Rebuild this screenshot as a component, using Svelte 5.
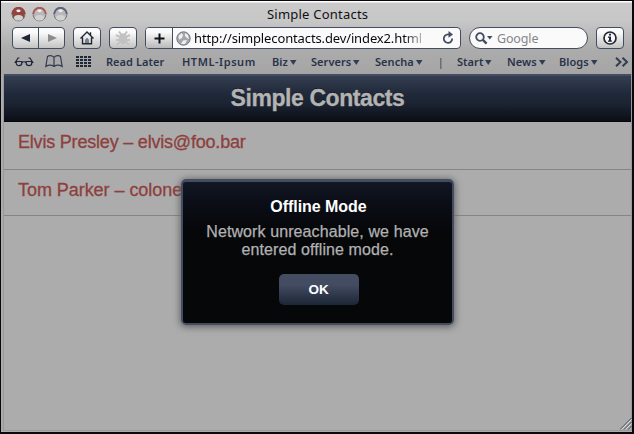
<script>
  const bookmarks = [
    { label: 'Read Later', width: 76, menu: false },
    { label: 'HTML-Ipsum', width: 90, spacing: 0.55, menu: false },
    { label: 'Biz', width: 39, menu: true },
    { label: 'Servers', width: 64, menu: true },
    { label: 'Sencha', width: 63, menu: true },
    { label: '|', width: 19, menu: false },
    { label: 'Start', width: 50, menu: true },
    { label: 'News', width: 52, menu: true },
    { label: 'Blogs', width: 56, menu: true }
  ];
  const contacts = ['Elvis Presley – elvis@foo.bar', 'Tom Parker – colonel@foo.bar'];
  const lights = ['#94433f', '#a95a56', '#59647b'];
</script>

<div class="window">
  <header class="chrome">
    <div class="titlebar">
      <div class="lights">
        {#each lights as color, i}
          <svg width="15" height="15" viewBox="0 0 15 15">
            <circle cx="7.5" cy="7.5" r="6.4" fill={i ? '#b8b8ba' : '#94433f'} stroke="#777" />
            <path d="M1.3 7A6.2 6.2 0 0 1 13.7 7" fill="none" stroke={color} stroke-width="2" />
            <ellipse cx="7.5" cy="10.8" rx="4.5" ry="2.8" fill="#d2d2d2" />
            <ellipse cx="7.5" cy="3.8" rx="2.2" ry="1.4" fill="#eee" />
          </svg>
        {/each}
      </div>
      <span class="title">Simple Contacts</span>
    </div>

    <div class="toolbar">
      <div class="btn nav">
        <span><svg width="10" height="10"><path d="M9 1v8L0 5z" fill="#1f2736" /></svg></span>
        <span><svg width="10" height="10"><path d="M1 1v8l9-4z" fill="#8c8c8e" /></svg></span>
      </div>
      <div class="btn">
        <svg width="16" height="16" viewBox="0 0 16 16" fill="none" stroke="#1f2736" stroke-width="1.4">
          <path d="M1.5 8.5 8 2l6.5 6.5M3.500 7.500v6.300h9V7.500M11.500 5V2.200" />
          <path d="M7 13.500V9.700L8 8.500l1 1.200v3.800" stroke-width="1" />
        </svg>
      </div>
      <div class="btn">
        <svg width="16" height="16" viewBox="0 0 16 16" fill="none" stroke="#c2c2c3" stroke-width="2">
          <ellipse cx="8" cy="8.7" rx="3" ry="4.5" fill="#c2c2c3" />
          <path d="M4 1.5 6.5 5M12 1.5 9.5 5M1 5l4 2M15 5l-4 2M1 10h14M2 14.5l3.500-3M14 14.500l-3.500-3" />
        </svg>
      </div>
      <div class="address">
        <div class="add"><svg width="11" height="11"><path d="M5.500 0.500v10M0.500 5.500h10" stroke="#0c101b" stroke-width="2" /></svg></div>
        <svg class="globe" width="15" height="15" viewBox="0 0 15 15">
          <circle cx="7.5" cy="7.5" r="6.7" fill="#a5a6aa" stroke="#777a83" />
          <path d="M2.500 5 5.500 2l1.500 2-1 3-3 1.500zM9 2l3 2 1 4-2-1-2-2zM7 9.500l4-.5-2 4-4 0z" fill="#f0f0f0" />
        </svg>
        <span class="url">http://simplecontacts.dev/index2.html</span>
        <svg class="reload" width="12" height="14" viewBox="0 0 12 14">
          <path d="M10.200 7.500A4.200 4.200 0 1 1 6 3.400H8" fill="none" stroke="#434c61" stroke-width="1.8" />
          <path d="M6.500 0v6.800L11 3.400z" fill="#434c61" />
        </svg>
      </div>
      <div class="search">
        <svg width="18" height="14" viewBox="0 0 18 14">
          <circle cx="5" cy="6" r="3.8" fill="none" stroke="#434c61" stroke-width="1.8" />
          <path d="m7.600 8.600 4 4" stroke="#434c61" stroke-width="2.4" />
          <path d="M12 5h5.500l-2.700 3.500z" fill="#434c61" />
        </svg>
        <span>Google</span>
      </div>
      <div class="btn">
        <svg width="14" height="14" viewBox="0 0 14 14">
          <circle cx="7" cy="7" r="6" fill="#f8f8f8" stroke="#1f2736" stroke-width="1.7" />
          <path d="M6 2.800h2v1.700H6zM5 5.600h3v4h1v1.200H5V9.600h1V6.700H5z" fill="#1f2736" />
        </svg>
      </div>
    </div>

    <nav class="bookmarks">
      <svg class="glasses" width="20" height="10" viewBox="0 0 20 10" fill="none" stroke="#1f2736" stroke-width="1.2">
        <path d="M1.200 5.500 4 1h1.500M18.800 5.500 16 1h-1.500M.5 5.500h2M8 5.500c1-1 3-1 4 0M17.500 5.500h2" />
        <path d="M2.200 4.500h5.600v1.500c0 3.500-5.600 3.500-5.600 0zM12.200 4.500h5.600v1.500c0 3.500-5.600 3.500-5.600 0z" />
      </svg>
      <svg class="book" width="18" height="13" viewBox="0 0 18 13" fill="none" stroke="#343d50" stroke-width="1.2">
        <path d="M9 2.500C7.500.2 4 .2 2.500 1.500L.8 11.500c2.500-1.500 6-1.500 8.200 0 2.200-1.500 5.700-1.500 8.200 0l-1.700-10C14 .2 10.500.2 9 2.500zV11.500" />
      </svg>
      <svg class="grid" width="15" height="12">
        {#each [0, 1, 2, 3] as col}
          {#each [0, 1, 2, 3] as row}
            <rect x={col * 4} y={row * 3} width="3" height="2" fill="#1f2736" />
          {/each}
        {/each}
      </svg>
      {#each bookmarks as item}
        <span class="bookmark" class:divider={item.label === '|'} style:width="{item.width}px" style:letter-spacing="{item.spacing ?? 0.05}px">
          {item.label}{#if item.menu}<svg width="7" height="5"><path d="M0 0h6.500L3.250 5z" fill="#343d50" /></svg>{/if}
        </span>
      {/each}
      <svg class="more" width="14" height="10" fill="none" stroke="#343d50" stroke-width="2">
        <path d="m1 .7 4.500 4.300L1 9.300M7.500.7 12 5 7.500 9.300" />
      </svg>
    </nav>
  </header>

  <main>
    <h1>Simple Contacts</h1>
    {#each contacts as contact}
      <div class="row"><span>{contact}</span></div>
    {/each}
  </main>

  <section class="dialog" role="dialog" aria-label="Offline Mode">
    <h2>Offline Mode</h2>
    <p>Network unreachable, we have<br />entered offline mode.</p>
    <button>OK</button>
  </section>

  <svg class="grip" width="12" height="12" stroke="#434c61">
    <path d="M0 11.500 11.500 0M4 11.500 11.500 4M8 11.500 11.500 8" />
    <path d="M1.500 11.500 11.500 1.500M5.500 11.500 11.500 5.500" stroke="#ddd" />
  </svg>
</div>

<style>
  :global(body) { background: #0a080c; }
  .window {
    position: relative;
    box-sizing: border-box;
    width: 634px;
    height: 434px;
    border: 1px solid #0a080c;
    border-right-width: 2px;
    border-bottom-width: 2px;
    background: #acacac;
    overflow: hidden;
    font-family: "Liberation Sans", sans-serif;
  }
  .chrome {
    height: 73px;
    background: linear-gradient(#fff 0 1px, #cacaca 2px, #c7c7c7 20px, #acacac 48px, #a5a5a5 73px);
    font-family: "Noto Sans", sans-serif;
  }
  .titlebar { display: flex; height: 26px; align-items: center; }
  .lights { display: flex; flex: none; gap: 6px; padding-left: 10px; width: 266px; box-sizing: border-box; }
  .title { font-size: 13px; line-height: 18px; letter-spacing: .22px; color: #111; white-space: nowrap; }
  .toolbar { display: flex; height: 22px; padding-left: 11px; gap: 8px; }
  .btn, .address, .search { box-sizing: border-box; border: 1px solid #434c61; height: 22px; }
  .btn {
    display: flex;
    align-items: center;
    justify-content: center;
    width: 28px;
    border-radius: 4px;
    background: linear-gradient(#fbfbfb 20%, #c3c3c3);
  }
  .nav { width: 53px; }
  .nav span { flex: 1; height: 100%; display: flex; align-items: center; justify-content: center; }
  .nav span + span { border-left: 1px solid #434c61; }
  .address { display: flex; width: 316px; align-items: center; border-radius: 4px; background: #fafafa; overflow: hidden; }
  .add {
    display: flex;
    align-items: center;
    justify-content: center;
    width: 26px;
    height: 20px;
    border-right: 1px solid #434c61;
    background: linear-gradient(#fafafa 20%, #b9b9b9);
  }
  .globe { margin-left: 3px; }
  .url {
    width: 248px;
    margin-left: 3px;
    font-size: 13px;
    letter-spacing: -.13px;
    white-space: nowrap;
    color: transparent;
    background: linear-gradient(90deg, #080a10 210px, #c5c5c5 229px);
    background-clip: text;
  }
  .reload { margin-left: 0; }
  .search { display: flex; align-items: center; width: 119px; padding-left: 5px; border-radius: 11px; background: #fafafa; }
  .search span { margin-left: 4px; font-size: 12.5px; letter-spacing: -.15px; color: #858587; }
  .bookmarks { display: flex; height: 24px; align-items: center; box-sizing: border-box; padding: 1px 0 0 13px; }
  .book { margin-left: 11px; }
  .grid { margin: 0 15px 0 13px; }
  .bookmark { flex: none; font-size: 11px; font-weight: 600; line-height: 20px; color: #29334a; white-space: nowrap; }
  .divider { font-size: 10px; font-weight: 400; }
  .bookmark svg { margin-left: 2px; vertical-align: 1px; }
  main { height: 356px; margin-left: 2px; border: solid #99999c; border-width: 0 1px 1px; }
  h1 {
    margin: 0;
    box-sizing: border-box;
    height: 48px;
    border-top: 2px solid #434c61;
    border-bottom: 1px solid #05070b;
    background: linear-gradient(#343e51, #1f2838 42%, #1c2433 60%, #0b0e16);
    color: #b3b3b3;
    font-size: 23px;
    line-height: 44px;
    letter-spacing: -.42px;
    text-align: center;
    text-shadow: 0 -1px #11151e;
    -webkit-text-stroke: .3px;
  }
  .row { height: 47px; border-bottom: 1px solid #858587; padding-left: 14px; font-size: 18px; line-height: 41px; letter-spacing: -.2px; color: #8d403d; -webkit-text-stroke: .3px; }
  .row:last-child { height: 45px; letter-spacing: -.05px; }
  .dialog {
    position: absolute;
    left: 180px;
    top: 178px;
    box-sizing: border-box;
    width: 273px;
    height: 146px;
    border: 2px solid #434c61;
    border-top-width: 3px;
    border-radius: 5px;
    background: linear-gradient(#121824 0, #0b0e17 20px, #060709 50px);
    box-shadow: 0 1px 7px 1px #606064;
    text-align: center;
  }
  h2 { margin: 16px 0 0; padding-left: 2px; font-size: 16px; line-height: 18px; letter-spacing: -.05px; color: #fff; }
  p { margin: 7px 0 0; font-size: 16px; line-height: 18px; letter-spacing: .1px; color: #b1b1b3; white-space: nowrap; -webkit-text-stroke: .25px; }
  button {
    width: 80px;
    height: 31px;
    margin: 15px 0 0 2px;
    border: 0;
    border-bottom: 1px solid #1f2838;
    border-radius: 5px;
    background: linear-gradient(#434c61 35%, #1f2838);
    color: #fff;
    font: bold 13.500px "Liberation Sans", sans-serif;
  }
  .grip { position: absolute; right: 0; bottom: 2px; }
</style>
